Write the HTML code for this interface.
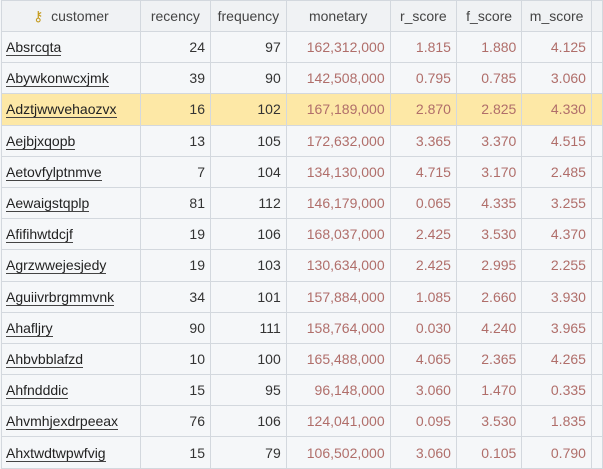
<!DOCTYPE html>
<html><head><style>
body{margin:0;width:603px;height:455px;overflow:hidden;background:#f4f6f8;font-family:"Liberation Sans",sans-serif;font-size:14px}
table{position:absolute;left:1px;top:0;border-collapse:collapse;table-layout:fixed}
td,th{border:1px solid #d3d8de;height:30.2px;padding:0 5px;white-space:nowrap;overflow:hidden}
th{font-weight:normal;color:#444;background:#f0f2f4;text-align:center;height:30px}
td{text-align:right;color:#333;background:#f5f7f9}
td.c{text-align:left;color:#222;padding-left:4px}
td.c span{border-bottom:1px solid #444}
td.m{color:#b06e6a}
tr.sel td{background:#fde8a6}
</style></head><body>
<table>
<colgroup><col style="width:140px"><col style="width:71px"><col style="width:76px"><col style="width:105px"><col style="width:67px"><col style="width:66px"><col style="width:70px"><col style="width:8px"></colgroup>
<tr><th><span style="color:#c49a1c">&#x26B7;</span>&nbsp; customer</th><th>recency</th><th>frequency</th><th>monetary</th><th>r_score</th><th>f_score</th><th>m_score</th><th></th></tr>
<tr><td class="c"><span>Absrcqta</span></td><td>24</td><td>97</td><td class="m">162,312,000</td><td class="m">1.815</td><td class="m">1.880</td><td class="m">4.125</td><td></td></tr>
<tr><td class="c"><span>Abywkonwcxjmk</span></td><td>39</td><td>90</td><td class="m">142,508,000</td><td class="m">0.795</td><td class="m">0.785</td><td class="m">3.060</td><td></td></tr>
<tr class="sel"><td class="c"><span>Adztjwwvehaozvx</span></td><td>16</td><td>102</td><td class="m">167,189,000</td><td class="m">2.870</td><td class="m">2.825</td><td class="m">4.330</td><td></td></tr>
<tr><td class="c"><span>Aejbjxqopb</span></td><td>13</td><td>105</td><td class="m">172,632,000</td><td class="m">3.365</td><td class="m">3.370</td><td class="m">4.515</td><td></td></tr>
<tr><td class="c"><span>Aetovfylptnmve</span></td><td>7</td><td>104</td><td class="m">134,130,000</td><td class="m">4.715</td><td class="m">3.170</td><td class="m">2.485</td><td></td></tr>
<tr><td class="c"><span>Aewaigstqplp</span></td><td>81</td><td>112</td><td class="m">146,179,000</td><td class="m">0.065</td><td class="m">4.335</td><td class="m">3.255</td><td></td></tr>
<tr><td class="c"><span>Afifihwtdcjf</span></td><td>19</td><td>106</td><td class="m">168,037,000</td><td class="m">2.425</td><td class="m">3.530</td><td class="m">4.370</td><td></td></tr>
<tr><td class="c"><span>Agrzwwejesjedy</span></td><td>19</td><td>103</td><td class="m">130,634,000</td><td class="m">2.425</td><td class="m">2.995</td><td class="m">2.255</td><td></td></tr>
<tr><td class="c"><span>Aguiivrbrgmmvnk</span></td><td>34</td><td>101</td><td class="m">157,884,000</td><td class="m">1.085</td><td class="m">2.660</td><td class="m">3.930</td><td></td></tr>
<tr><td class="c"><span>Ahafljry</span></td><td>90</td><td>111</td><td class="m">158,764,000</td><td class="m">0.030</td><td class="m">4.240</td><td class="m">3.965</td><td></td></tr>
<tr><td class="c"><span>Ahbvbblafzd</span></td><td>10</td><td>100</td><td class="m">165,488,000</td><td class="m">4.065</td><td class="m">2.365</td><td class="m">4.265</td><td></td></tr>
<tr><td class="c"><span>Ahfndddic</span></td><td>15</td><td>95</td><td class="m">96,148,000</td><td class="m">3.060</td><td class="m">1.470</td><td class="m">0.335</td><td></td></tr>
<tr><td class="c"><span>Ahvmhjexdrpeeax</span></td><td>76</td><td>106</td><td class="m">124,041,000</td><td class="m">0.095</td><td class="m">3.530</td><td class="m">1.835</td><td></td></tr>
<tr><td class="c"><span>Ahxtwdtwpwfvig</span></td><td>15</td><td>79</td><td class="m">106,502,000</td><td class="m">3.060</td><td class="m">0.105</td><td class="m">0.790</td><td></td></tr>
</table>
</body></html>
